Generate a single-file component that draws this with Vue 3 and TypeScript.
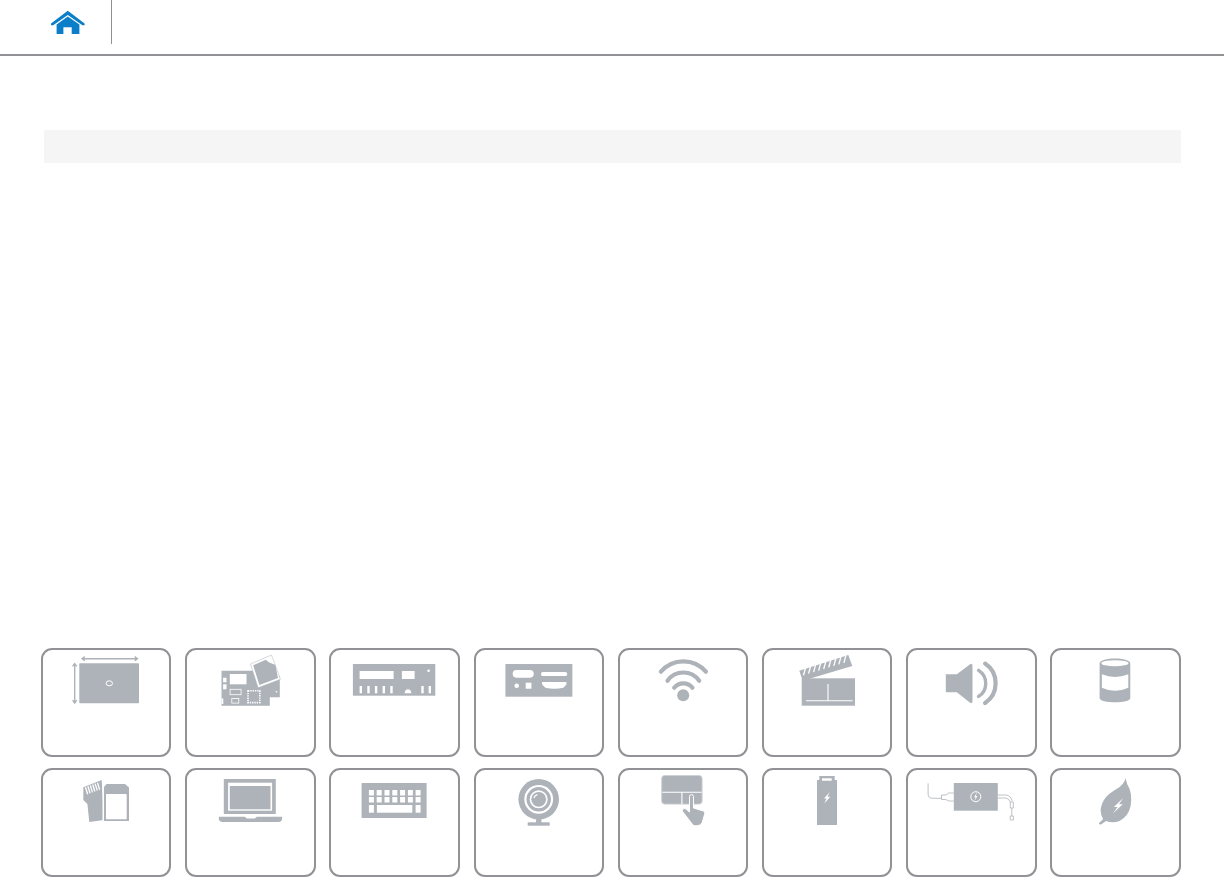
<template>
  <div class="page">
    <header class="topbar">
      <a class="home" href="#" aria-label="Home">
        <svg width="36" height="26" viewBox="0 0 36 26">
          <path class="blue" d="M17.8 0.8 L34.6 13.4 V15.2 H32.4 L17.8 5 L3.2 15.2 H1 V13.4 Z" />
          <path class="blue" d="M17.8 6.4 L29.4 14.4 V24 H21.7 V17.3 H13.4 V24 H6.6 V14.4 Z" />
        </svg>
      </a>
    </header>

    <div class="title-bar"></div>

    <section class="tiles">
      <!-- dimensions -->
      <div class="tile">
        <svg class="icon" viewBox="2 2 126.4 105">
          <rect x="38.3" y="15.3" width="59.7" height="40" rx="0.8" />
          <ellipse class="ring" cx="68.3" cy="35.3" rx="3.2" ry="2.5" />
          <path class="thin" d="M41 10.7 H96.5 M43.8 8.6 L41 10.7 L43.8 12.8 M93.7 8.6 L96.5 10.7 L93.7 12.8" />
          <path class="thin" d="M33.7 15.6 V55 M31.6 18.4 L33.7 15.6 L35.8 18.4 M31.6 52.2 L33.7 55 L35.8 52.2" />
        </svg>
      </div>

      <!-- system board -->
      <div class="tile">
        <svg class="icon" viewBox="2.2 2 126.4 105">
          <polygon points="36.7,22.7 68,22.7 95,28 95,49.3 85,49.3 85,57.7 36.7,57.7" />
          <rect class="w" x="45" y="26" width="16.7" height="10.3" />
          <rect class="w" x="38.3" y="29.7" width="3.4" height="4.6" />
          <rect class="w" x="38.3" y="36.3" width="3.4" height="5" />
          <rect class="w" x="36.7" y="50.5" width="1.8" height="5.5" />
          <rect class="w" x="91" y="43" width="1.4" height="1.4" />
          <rect class="slot" x="45.3" y="41.3" width="11" height="5.4" />
          <rect class="slot" x="47" y="50.5" width="7" height="4.6" />
          <rect class="chip" x="63.2" y="42.8" width="11.8" height="11.8" />
          <polygon class="card" points="65.7,16 86.7,7 95.7,31.3 73.3,39.7" />
          <polygon points="68.4,17.3 81,11.8 84,14.2 90.6,17 93.2,30 74.6,37" />
        </svg>
      </div>

      <!-- ports, back panel -->
      <div class="tile">
        <svg class="icon" viewBox="2.4 2 126.4 105">
          <rect x="24.3" y="16" width="82.4" height="31.7" />
          <rect class="w" x="31" y="23" width="34" height="8" />
          <rect class="w" x="73.3" y="23" width="12.7" height="8" />
          <circle class="w" cx="100" cy="22.7" r="1.3" />
          <rect v-for="x in panelTicks" :key="x" class="w" :x="x" y="38" width="2.4" height="7.3" />
          <path class="w" d="M76 45.3 Q76.4 41.3 79.4 41.3 Q82.4 41.3 82.8 45.3 Z" />
        </svg>
      </div>

      <!-- ports, side -->
      <div class="tile">
        <svg class="icon" viewBox="2.6 2 126.4 105">
          <rect x="32" y="16" width="67" height="32.7" />
          <rect class="w" x="39.3" y="22" width="21" height="7.7" rx="3.6" />
          <rect class="w" x="67.7" y="24" width="26" height="4" rx="1.6" />
          <circle class="w" cx="43.3" cy="37.7" r="2.3" />
          <rect class="w" x="52.3" y="34.7" width="5.7" height="6" />
          <path class="w" d="M68.7 34 H93 V36.4 L90 39.8 Q81 41.6 72 39.8 L68.7 36.4 Z" />
        </svg>
      </div>

      <!-- wireless -->
      <div class="tile">
        <svg class="icon" viewBox="2.8 2 126.4 105">
          <circle cx="66" cy="47.3" r="6" />
          <path class="arc" d="M57 39.7 A11.7 11.7 0 0 1 75.3 39.7" />
          <path class="arc" d="M50.3 32.7 A19.4 19.4 0 0 1 82 32.7" />
          <path class="arc" d="M43.7 23.7 A29.5 29.5 0 0 1 88.7 23.7" />
        </svg>
      </div>

      <!-- media -->
      <div class="tile">
        <svg class="icon" viewBox="3 2 126.4 105">
          <polygon points="38.3,22.7 87.3,7 91.3,18 41.7,32.7" />
          <path
            v-for="t in clapTicks"
            :key="t.x"
            class="tick"
            :d="`M${t.x + 1} ${t.y - 3.6} L${t.x - 1} ${t.y + 3.6}`"
          />
          <rect x="40.7" y="30.3" width="53.3" height="27.4" />
          <path class="cut" d="M45 52.7 H91.7 M67 36 V52.7" />
        </svg>
      </div>

      <!-- audio -->
      <div class="tile">
        <svg class="icon" viewBox="3.2 2 126.4 105">
          <path d="M41 26.3 H52 L65 16.4 Q67.7 14.8 67.7 18 V53 Q67.7 56.2 65 54.6 L52 44.3 H41 Z" />
          <path class="arc thin-arc" d="M73.8 22.4 A15.4 15.4 0 0 1 73.8 48.4" />
          <path class="arc" d="M80.3 15.6 A23.7 23.7 0 0 1 80.3 55" />
        </svg>
      </div>

      <!-- storage -->
      <div class="tile">
        <svg class="icon" viewBox="3.4 2 126.4 105">
          <path d="M51 15.5 C51 8.8 81.7 8.8 81.7 15.5 V50 C81.7 55.8 51 55.8 51 50 Z" />
          <ellipse class="w" cx="66.3" cy="15.2" rx="13.6" ry="3" />
          <path class="w" d="M53.3 26.3 Q66.3 31.6 79.7 26.3 V39.7 Q66.3 46 53.3 39.7 Z" />
        </svg>
      </div>

      <!-- media card -->
      <div class="tile">
        <svg class="icon" viewBox="2 2 126.4 105">
          <polygon points="42.3,19.3 60.7,12 63,52 48.3,54 46.4,36 42.3,32" />
          <path v-for="c in cardContacts" :key="c.x" class="tick" :d="`M${c.x} ${c.y} l2.2 7`" />
          <path class="w" d="M61.5 15.5 H90 V54.5 H61.5 Z" />
          <path d="M63 19 L65.5 16 H84 L88 19.5 V53 H63 Z" />
          <rect class="w" x="65" y="26" width="20.7" height="25.3" rx="0.8" />
        </svg>
      </div>

      <!-- display -->
      <div class="tile">
        <svg class="icon" viewBox="2.2 2 126.4 105">
          <rect x="39" y="11" width="52" height="35" />
          <rect class="w" x="43.3" y="14.7" width="44" height="28" />
          <rect x="45" y="18" width="40.7" height="23.3" />
          <path d="M34 48.7 H60 L62 50.5 H70 L72 48.7 H97.3 V50.5 Q97.3 54 93.5 54 H38 Q34 54 34 50.5 Z" />
        </svg>
      </div>

      <!-- keyboard -->
      <div class="tile">
        <svg class="icon" viewBox="2.4 2 126.4 105">
          <rect x="33" y="15" width="65" height="35" />
          <template v-for="y in [22, 29]" :key="y">
            <rect v-for="x in keyColumns" :key="x" class="w" :x="x" :y="y" width="5" height="5.5" />
          </template>
          <rect class="w" x="40.3" y="37" width="5" height="7.7" />
          <rect class="w" x="48.3" y="37" width="35.4" height="7.7" />
          <rect class="w" x="87" y="37" width="5" height="7.7" />
        </svg>
      </div>

      <!-- camera -->
      <div class="tile">
        <svg class="icon" viewBox="2.6 2 126.4 105">
          <circle cx="65.3" cy="31.3" r="20.3" />
          <circle class="w" cx="65.3" cy="31.3" r="14.4" />
          <circle cx="65.3" cy="31.3" r="12.2" />
          <circle class="w" cx="65.3" cy="31.3" r="9" />
          <circle cx="65.3" cy="31.3" r="7.4" />
          <path class="highlight" d="M60.6 30 A4.8 4.8 0 0 1 64 26.6" />
          <rect x="62.7" y="50" width="5.3" height="5" />
          <rect x="54.3" y="54.3" width="22" height="3.4" />
        </svg>
      </div>

      <!-- touchpad -->
      <div class="tile">
        <svg class="icon" viewBox="2.8 2 126.4 105">
          <rect class="pad" x="44.5" y="7.5" width="40.4" height="28.6" rx="3" />
          <path class="cut" d="M45 24.3 H84.5 M64.7 24.3 V36" />
          <path class="hand" d="M72.3 28.6 A2 2 0 0 1 76.3 28.6 V40 L86.2 43 Q88 43.6 87.6 45.6 L85.2 54 Q84 57.8 80 57.8 H78 Q76.2 57.8 75 56 L65.4 43.6 Q64.4 41.8 66.2 40.8 Q67.6 40 69 41.2 L72.3 44 Z" />
        </svg>
      </div>

      <!-- battery -->
      <div class="tile">
        <svg class="icon" viewBox="3 2 126.4 105">
          <path d="M58.3 8 H73.7 V12 H76 V57 H56 V12 H58.3 Z" />
          <rect class="w" x="61" y="10.3" width="9.7" height="2.4" />
          <polygon class="w" points="68.8,24 63,30.5 65.5,30.5 63.4,35.6 69.2,28.8 66.6,28.8" />
        </svg>
      </div>

      <!-- power adapter -->
      <div class="tile">
        <svg class="icon" viewBox="3.2 2 126.4 105">
          <rect x="49" y="15" width="44" height="27.7" />
          <circle class="ring" cx="71" cy="28.7" r="5" />
          <polygon class="w" points="72,24.6 69.4,29.2 70.8,29.2 70,32.8 72.6,28 71.2,28" />
          <path class="wire" d="M23.3 15.3 V26 Q23.3 30.3 28 30.3 H36.7" />
          <path class="wire" d="M36.7 27 H41 L44 25 H49 M36.7 31.5 H41 L44 33 H49 M36.7 27 V31.5" />
          <path class="wire" d="M93 27 H101 Q106 27.5 107.5 33 M93 30 H101 Q104.5 30.5 105.5 34" />
          <path class="wire" d="M105.5 34 H108.5 V40 H105.5 Z M107 40 V48 M105.4 48 H108.6 V52 H105.4 Z" />
        </svg>
      </div>

      <!-- energy -->
      <div class="tile">
        <svg class="icon" viewBox="3.4 2 126.4 105">
          <path d="M77 10.3 Q78 16 81 21 Q83.6 28 82 38 Q80 48 71 53 Q64 55.6 57.5 53 L52 56.7 L50 55.5 L54.5 51 Q51 45 52.5 39 Q54.5 31 60.5 26 Q66 22 71 19 Q75.5 15.5 77 10.3 Z" />
          <polygon class="w" points="74.6,30 65.3,39 69,39 64.3,45.6 74.2,36.3 70.4,36.3" />
        </svg>
      </div>
    </section>
  </div>
</template>

<script setup lang="ts">
// small repeated marks inside the icons
const panelTicks = [31, 38.7, 46.3, 54, 61.7, 92.7, 100]
const keyColumns = [40.3, 48.1, 55.9, 63.7, 71.5, 79.3, 87]

const clapTicks = Array.from({ length: 9 }, (_, i) => ({
  x: 43.5 + i * 5.05,
  y: 23.6 - i * 1.55
}))

const cardContacts = Array.from({ length: 6 }, (_, i) => ({
  x: 44.5 + i * 2.4,
  y: 19.2 - i * 0.9
}))
</script>

<style>
html,
body {
  margin: 0;
  background: #fff;
}
</style>

<style scoped>
.page {
  height: 878px;
  display: flex;
  flex-direction: column;
  overflow: hidden;
  background: #fff;
}

.topbar {
  height: 54px;
  border-bottom: 2px solid #909296;
  flex: none;
}

.home {
  display: flex;
  box-sizing: border-box;
  width: 112px;
  height: 44px;
  padding: 10px 0 0 50px;
  border-right: 1px solid #909296;
}

.blue {
  fill: #0a7ec8;
}

.title-bar {
  flex: none;
  height: 33px;
  margin: 74px 43px 0 44px;
  background: #f5f5f5;
}

.tiles {
  margin: auto 0 1px 41px;
  display: grid;
  grid-template-columns: repeat(8, 130.4px);
  grid-auto-rows: 109px;
  gap: 11px 13.8px;
}

.tile {
  box-sizing: border-box;
  border: 2px solid #909296;
  border-radius: 11px;
}

.icon {
  display: block;
  width: 100%;
  height: 100%;
  fill: #aeb3b9;
  filter: blur(0.3px);
}

.icon .w {
  fill: #fff;
}

.icon .ring {
  fill: none;
  stroke: #fff;
  stroke-width: 1;
}

.icon .thin {
  fill: none;
  stroke: #aeb3b9;
  stroke-width: 1.4;
}

.icon .wire {
  fill: none;
  stroke: #aeb3b9;
  stroke-width: 0.8;
}

.icon .slot {
  fill: none;
  stroke: #fff;
  stroke-width: 0.8;
}

.icon .chip {
  stroke: #fff;
  stroke-width: 1.6;
  stroke-dasharray: 1.4 0.9;
}

.icon .card {
  fill: #fff;
  stroke: #aeb3b9;
  stroke-width: 0.5;
}

.icon .arc {
  fill: none;
  stroke: #aeb3b9;
  stroke-width: 4.2;
  stroke-linecap: round;
}

.icon .thin-arc {
  stroke-width: 3.4;
}

.icon .tick {
  fill: none;
  stroke: #fff;
  stroke-width: 1.3;
}

.icon .cut {
  fill: none;
  stroke: #fff;
  stroke-width: 1.1;
}

.icon .pad {
  stroke: #cfd2d6;
  stroke-width: 1;
}

.icon .hand {
  stroke: #fff;
  stroke-width: 1;
}

.icon .highlight {
  fill: none;
  stroke: #fff;
  stroke-width: 1.2;
}
</style>
